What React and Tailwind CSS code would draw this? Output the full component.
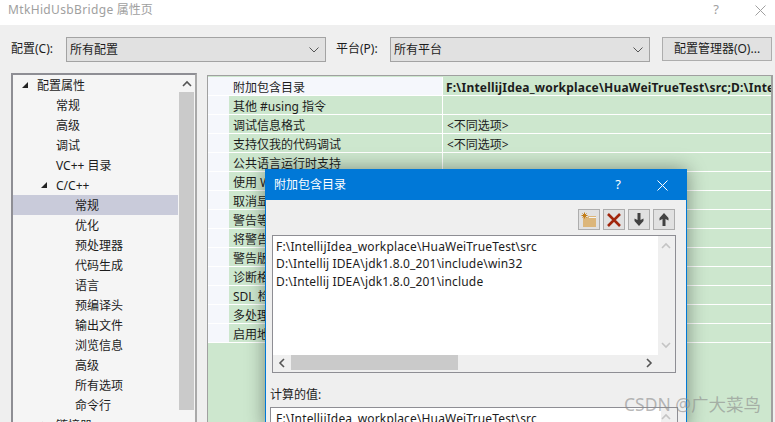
import React from "react";

const font = "font-['Noto_Sans','Noto_Sans_CJK_SC',sans-serif]";

const treeRows = [
  { label: "配置属性", indent: "pl-[24px]", arrow: "open" },
  { label: "常规", indent: "pl-[43px]" },
  { label: "高级", indent: "pl-[43px]" },
  { label: "调试", indent: "pl-[43px]" },
  { label: "VC++ 目录", indent: "pl-[43px]" },
  { label: "C/C++", indent: "pl-[43px]", arrow: "open2" },
  { label: "常规", indent: "pl-[62px]", selected: true },
  { label: "优化", indent: "pl-[62px]" },
  { label: "预处理器", indent: "pl-[62px]" },
  { label: "代码生成", indent: "pl-[62px]" },
  { label: "语言", indent: "pl-[62px]" },
  { label: "预编译头", indent: "pl-[62px]" },
  { label: "输出文件", indent: "pl-[62px]" },
  { label: "浏览信息", indent: "pl-[62px]" },
  { label: "高级", indent: "pl-[62px]" },
  { label: "所有选项", indent: "pl-[62px]" },
  { label: "命令行", indent: "pl-[62px]" },
  { label: "链接器", indent: "pl-[43px]", arrow: "closed" },
];

const gridRows = [
  ["附加包含目录", "F:\\IntellijIdea_workplace\\HuaWeiTrueTest\\src;D:\\Intellij IDEA\\jdk1.8.0_201\\include\\win32;D:\\Intellij"],
  ["其他 #using 指令", ""],
  ["调试信息格式", "<不同选项>"],
  ["支持仅我的代码调试", "<不同选项>"],
  ["公共语言运行时支持", ""],
  ["使用 Windows 运行时扩展", ""],
  ["取消显示启动版权标志", ""],
  ["警告等级", ""],
  ["将警告视为错误", ""],
  ["警告版本", ""],
  ["诊断格式", ""],
  ["SDL 检查", ""],
  ["多处理器编译", ""],
  ["启用地址擦除系统", ""],
];

const paths = [
  "F:\\IntellijIdea_workplace\\HuaWeiTrueTest\\src",
  "D:\\Intellij IDEA\\jdk1.8.0_201\\include\\win32",
  "D:\\Intellij IDEA\\jdk1.8.0_201\\include",
];

const Chevron = ({ className, d }) => (
  <svg width="10" height="10" viewBox="0 0 10 10" className={className} fill="none" stroke="currentColor" strokeWidth="1.6">
    <path d={d} />
  </svg>
);

const Select = ({ label, width }) => (
  <div className={`flex h-[25px] ${width} items-center justify-between border border-[#a3a3a3] bg-[#e1e1e1] pl-[3px] pr-[6px]`}>
    <span>{label}</span>
    <svg width="10" height="6" viewBox="0 0 10 6" fill="none" stroke="#555" strokeWidth="1">
      <path d="M0.5 0.5 L5 5 L9.5 0.5" />
    </svg>
  </div>
);

const Arrow = ({ type }) => {
  if (type === "closed") {
    return (
      <svg width="7" height="9" viewBox="0 0 7 9" className="absolute left-[-15px] top-[6px]" fill="none" stroke="#444">
        <path d="M1 1 L5 4.5 L1 8 Z" />
      </svg>
    );
  }
  return (
    <svg width="6" height="6" viewBox="0 0 6 6" className="absolute left-[-15px] top-[7px]" fill="#222">
      <path d="M6 0 V6 H0 Z" />
    </svg>
  );
};

const ToolButton = ({ children }) => (
  <div className="flex h-[21px] w-[22px] items-center justify-center border border-[#adadad] bg-[#e1e1e1]">{children}</div>
);

export default function App() {
  return (
    <div className={`${font} relative h-[422px] w-[775px] overflow-hidden bg-[#efefef] text-[12px] text-[#1c1c1c]`}>
      {/* title bar */}
      <div className="flex h-[25px] items-center justify-between bg-white pb-[5px] pl-[8px] pr-[9px] text-[#a0a0a0]">
        <span>
          <span className="tracking-[0.35px]">MtkHidUsbBridge</span> 属性页
        </span>
        <div className="flex items-center gap-[36px]">
          <span className="text-[13px]">?</span>
          <svg width="11" height="11" viewBox="0 0 11 11" stroke="#a0a0a0" strokeWidth="1">
            <path d="M0.5 0.5 L10.5 10.5 M10.5 0.5 L0.5 10.5" />
          </svg>
        </div>
      </div>

      {/* config row */}
      <div className="flex h-[48px] items-start pl-[11px] pt-[12px]">
        <span className="w-[55px] leading-[24px]">配置(C):</span>
        <Select label="所有配置" width="w-[260px]" />
        <span className="ml-[10px] w-[54px] leading-[24px]">平台(P):</span>
        <Select label="所有平台" width="w-[260px]" />
        <div className="ml-[12px] flex h-[24px] w-[110px] items-center justify-center border border-[#adadad] bg-[#e1e1e1]">
          配置管理器(O)...
        </div>
      </div>

      <div className="flex items-start pl-[11px]">
        {/* tree */}
        <div className="flex h-[360px] w-[186px] shrink-0 border-2 border-[#8e8e94] border-r-[#a9a9a9] bg-[#f5f5f5] pr-px">
          <div className="w-[165px] shrink-0 overflow-hidden">
            {treeRows.map((row, i) => (
              <div key={i} className={`h-[20px] leading-[22px] ${row.indent} ${row.selected ? "bg-[#c9cbda]" : ""}`}>
                <span className="relative inline-block">
                  {row.arrow && <Arrow type={row.arrow} />}
                  {row.label}
                </span>
              </div>
            ))}
          </div>
          <div className="w-[16px] shrink-0 pl-px">
            <div className="flex h-[17px] items-center justify-center text-[#555]">
              <Chevron d="M1 7 L5 3 L9 7" />
            </div>
            <div className="h-[318px] bg-[#cacaca]" />
          </div>
        </div>

        {/* property grid */}
        <div className="ml-[10px] mt-[2px] h-[360px] w-[566px] shrink-0 border border-r-2 border-[#a0a0a0] bg-[#cde7ce]">
          <div className="pt-px">
            {gridRows.map(([name, value], i) => (
              <div key={i} className="flex h-[19px] border-b border-white leading-[21px]">
                <div className="w-[21px] shrink-0 bg-[#f5f7fc]" />
                <div className={`w-[214px] shrink-0 overflow-hidden whitespace-nowrap border-r border-white pl-[4px] ${i === 0 ? "bg-[#f5f7fc]" : ""}`}>
                  {name}
                </div>
                <div className={`min-w-0 flex-1 overflow-hidden whitespace-nowrap ${i === 0 ? "pl-[3px] font-bold tracking-[0.2px]" : "pl-[4px]"}`}>
                  {value}
                </div>
              </div>
            ))}
          </div>
        </div>
      </div>

      {/* modal dialog */}
      <div className="absolute left-[265px] top-[169px] h-[260px] w-[422px] border border-[#0078d7] bg-[#efefef] shadow-[0_0_18px_rgba(0,0,0,0.4)]">
        <div className="flex h-[30px] items-center justify-between bg-[#0078d7] pl-[8px] pr-[18px] text-white">
          <span>附加包含目录</span>
          <div className="flex items-center gap-[36px]">
            <span className="text-[13px]">?</span>
            <svg width="11" height="11" viewBox="0 0 11 11" stroke="#fff" strokeWidth="1">
              <path d="M0.5 0.5 L10.5 10.5 M10.5 0.5 L0.5 10.5" />
            </svg>
          </div>
        </div>

        <div className="flex justify-end gap-[3px] pr-[11px] pt-[9px]">
          <ToolButton>
            <svg width="16" height="16" viewBox="0 0 16 16">
              <path d="M2 5 H7 V4 H15 V15 H2 Z" fill="#dcb67a" />
              <path d="M8 5.5 H15" stroke="#f3f3f3" strokeWidth="1" />
              <path d="M3.5 0.5 V6.5 M0.5 3.5 H6.5 M1.5 1.5 L5.5 5.5 M5.5 1.5 L1.5 5.5" stroke="#c27d1a" strokeWidth="1" />
            </svg>
          </ToolButton>
          <ToolButton>
            <svg width="14" height="14" viewBox="0 0 14 14" stroke="#a1260d" strokeWidth="2.6">
              <path d="M1 1 L13 13 M13 1 L1 13" />
            </svg>
          </ToolButton>
          <ToolButton>
            <svg width="10" height="13" viewBox="0 0 10 13" fill="#424242">
              <path d="M3.5 0 H6.5 V7 L9.5 5.5 V8 L5 13 L0.5 8 V5.5 L3.5 7 Z" />
            </svg>
          </ToolButton>
          <ToolButton>
            <svg width="10" height="13" viewBox="0 0 10 13" fill="#424242">
              <path d="M3.5 13 H6.5 V6 L9.5 7.5 V5 L5 0 L0.5 5 V7.5 L3.5 6 Z" />
            </svg>
          </ToolButton>
        </div>

        {/* list box */}
        <div className="ml-[6px] mt-[5px] h-[138px] w-[404px] border border-[#8e8e94] bg-[#efefef]">
          <div className="flex h-[119px]">
            <div className="w-[385px] shrink-0 bg-white pl-[3px] pt-[2px] leading-[17.4px] tracking-[0.16px]">
              {paths.map((p) => (
                <div key={p}>{p}</div>
              ))}
            </div>
            <div className="flex flex-1 flex-col items-center justify-between py-[5px] pr-[2px] text-[#c4c4c4]">
              <Chevron d="M1 7 L5 3 L9 7" />
              <Chevron d="M1 3 L5 7 L9 3" />
            </div>
          </div>
          <div className="flex h-[15px] items-center">
            <div className="flex w-[18px] justify-center text-[#555]">
              <Chevron d="M7 1 L3 5 L7 9" />
            </div>
            <div className="h-full w-[167px] bg-[#cacaca]" />
            <div className="ml-[186px] text-[#555]">
              <Chevron d="M3 1 L7 5 L3 9" />
            </div>
          </div>
        </div>

        <div className="ml-[4px] mt-[13px] leading-[18px]">计算的值:</div>

        {/* evaluated value */}
        <div className="ml-[4px] mt-[3px] flex h-[60px] w-[408px] border border-[#8e8e94] bg-white pl-[5px]">
          <div className="flex-1 leading-[22px] tracking-[0.16px]">{paths[0]}</div>
          <div className="w-[16px] bg-[#efefef] pt-[4px] text-[#c4c4c4]">
            <Chevron d="M1 7 L5 3 L9 7" />
          </div>
        </div>
      </div>

      {/* watermark */}
      <div className="absolute left-[624px] top-[392px] text-[17.5px] leading-[24px] text-[#8a8a8a]/60">CSDN @广大菜鸟</div>
    </div>
  );
}
